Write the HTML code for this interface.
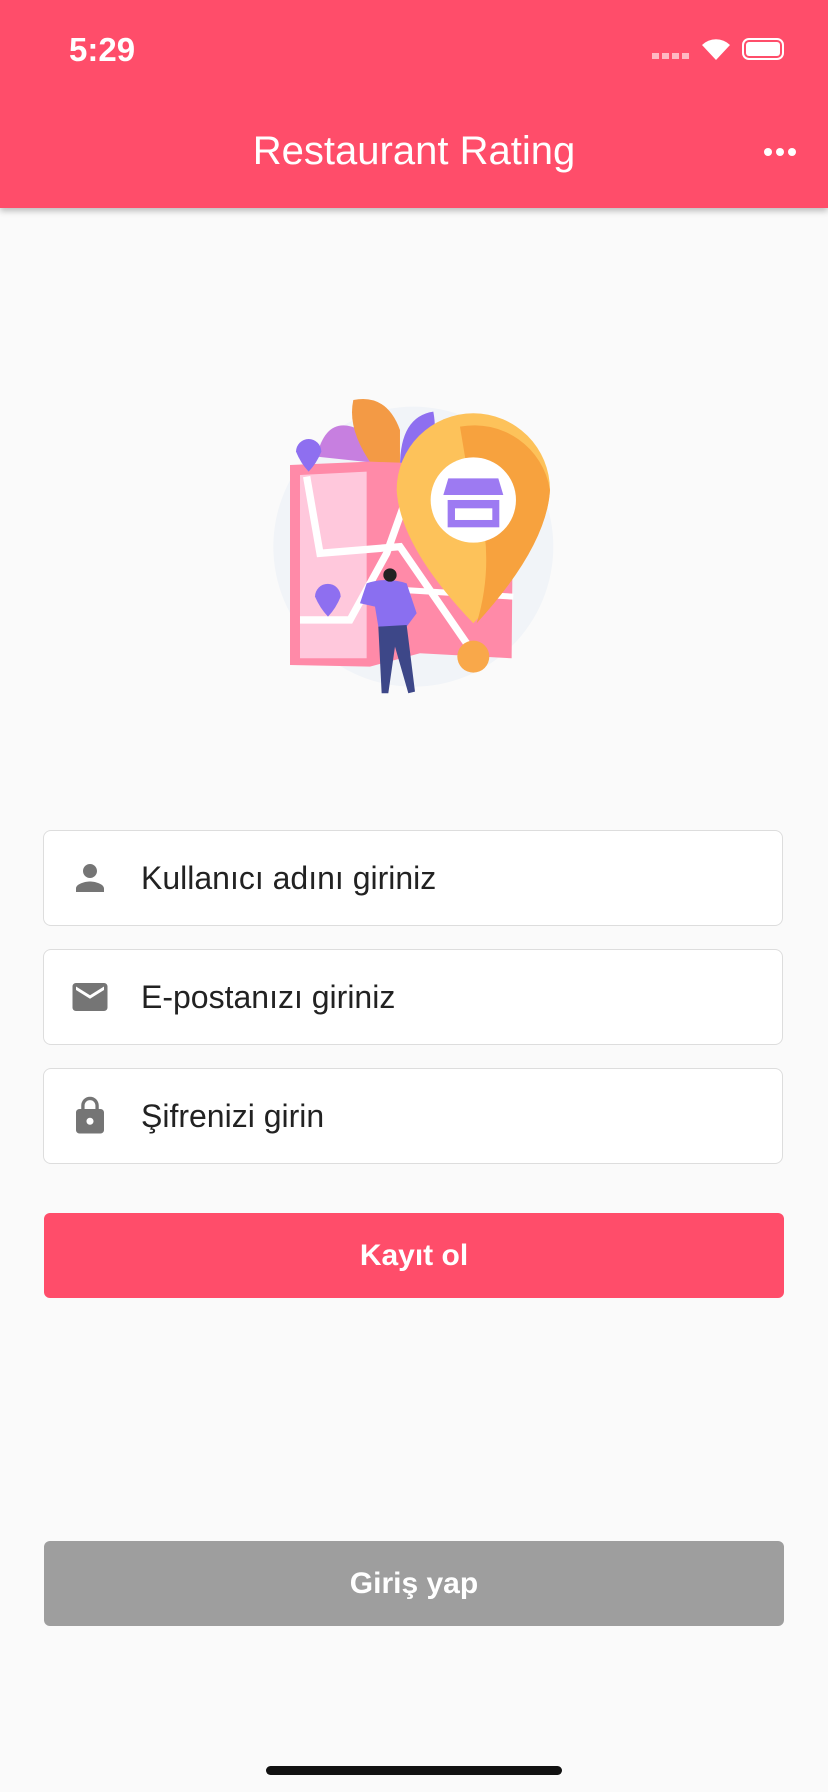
<html><head><style>
body{margin:0;width:828px;height:1792px;background:#fafafa;font-family:"Liberation Sans",sans-serif;position:relative;overflow:hidden}
.hdr{position:absolute;left:0;top:0;width:828px;height:208px;background:#ff4d6a;box-shadow:0 3px 6px rgba(0,0,0,.25)}
.field{position:absolute;left:43px;width:740px;height:96px;background:#fff;border:1px solid #ddd;border-radius:8px;box-sizing:border-box}
.field span{position:absolute;left:97px;top:29px;font-size:32px;color:#222}
.field svg{position:absolute;left:25px;top:26px}
.btn{position:absolute;left:44px;width:740px;height:85px;border-radius:6px;color:#fff;font-weight:bold;font-size:30px;text-align:center;line-height:85px}
</style></head><body>
<div class="hdr">
<div style="position:absolute;left:69px;top:31px;font-size:33px;color:#fff;font-weight:bold">5:29</div>
<div style="position:absolute;left:652px;top:53px;width:38px;height:6px;background:repeating-linear-gradient(90deg,rgba(255,255,255,.6) 0 7px,transparent 7px 10px)"></div>
<svg style="position:absolute;left:700px;top:36px" width="32" height="26" viewBox="0 0 32 26"><path d="M16 24 L2 9 A20 20 0 0 1 30 9 Z" fill="#fff"/></svg>
<div style="position:absolute;left:742px;top:38px;width:42px;height:22px;border:2px solid #fff;border-radius:7px;box-sizing:border-box;padding:2px"><div style="background:#fff;height:100%;border-radius:3px"></div></div>
<div style="position:absolute;left:0;width:828px;top:129px;text-align:center;font-size:40px;color:#fff">Restaurant Rating</div>
<div style="position:absolute;left:764px;top:148px;width:8px;height:8px;border-radius:50%;background:#fff;box-shadow:12px 0 #fff,24px 0 #fff"></div>
</div>
<svg style="position:absolute;left:0;top:0" width="828" height="800">
<g transform="translate(260,380) scale(0.3333)">
<circle cx="460" cy="500" r="420" fill="#f1f4f8"/>
<path d="M170 230 Q200 100 300 150 Q360 200 360 250 Z" fill="#c77fe0"/>
<path d="M280 60 Q380 40 420 150 L420 260 L340 260 Q260 150 280 60Z" fill="#f39a45"/>
<path d="M420 260 Q420 110 520 95 Q540 200 470 270Z" fill="#8e6ff0"/>
<path d="M90 255 L330 245 L760 260 L755 835 L480 820 L330 860 L90 855 Z" fill="#ff8aa8"/>
<path d="M120 285 L320 275 L320 835 L120 835Z" fill="#ffc8dc"/>
<path d="M140 290 L180 520 L420 500 L620 790" stroke="#fff" stroke-width="22" fill="none"/>
<path d="M120 720 L270 720 L380 520 L430 380" stroke="#fff" stroke-width="22" fill="none"/>
<path d="M430 630 L760 650" stroke="#fff" stroke-width="18" fill="none"/>
<path d="M410 330 A230 230 0 1 1 870 330 Q860 500 640 730 Q420 500 410 330Z" fill="#fdc25a"/>
<path d="M600 140 A230 230 0 0 1 870 330 Q860 500 650 730 Q720 500 620 260Z" fill="#f7a23e"/>
<circle cx="640" cy="360" r="128" fill="#fff"/>
<path d="M565 295 L715 295 L730 345 L550 345Z" fill="#9d7af2"/>
<rect x="563" y="360" width="155" height="82" fill="#9d7af2"/><rect x="585" y="385" width="112" height="35" fill="#fff"/>
<circle cx="640" cy="830" r="48" fill="#f9a84a"/>
<path d="M108 215 A38 38 0 1 1 184 215 Q170 250 146 275 Q122 250 108 215Z" fill="#8e6ff0"/>
<path d="M165 650 A38 38 0 1 1 242 650 Q228 685 204 710 Q180 685 165 650Z" fill="#8e6ff0"/>
<path d="M320 610 Q380 590 440 610 L470 700 L440 740 L355 740 L345 680 L300 670Z" fill="#8a6ff0"/>
<path d="M355 740 L440 735 L465 935 L445 940 L405 800 L385 940 L365 940Z" fill="#3d4788"/>
<circle cx="390" cy="585" r="20" fill="#222"/>
</g></svg>
<div class="field" style="top:830px"><svg width="42" height="42" viewBox="0 0 24 24"><path fill="#757575" d="M12 12c2.2 0 4-1.8 4-4s-1.8-4-4-4-4 1.8-4 4 1.8 4 4 4zm0 2c-2.7 0-8 1.3-8 4v2h16v-2c0-2.7-5.3-4-8-4z"/></svg><span>Kullanıcı adını giriniz</span></div>
<div class="field" style="top:949px"><svg width="42" height="42" viewBox="0 0 24 24"><path fill="#757575" d="M20 4H4c-1.1 0-2 .9-2 2v12c0 1.1.9 2 2 2h16c1.1 0 2-.9 2-2V6c0-1.1-.9-2-2-2zm0 4l-8 5-8-5V6l8 5 8-5v2z"/></svg><span>E-postanızı giriniz</span></div>
<div class="field" style="top:1068px"><svg width="42" height="42" viewBox="0 0 24 24"><path fill="#757575" d="M18 8h-1V6c0-2.8-2.2-5-5-5S7 3.2 7 6v2H6c-1.1 0-2 .9-2 2v10c0 1.1.9 2 2 2h12c1.1 0 2-.9 2-2V10c0-1.1-.9-2-2-2zm-6 9c-1.1 0-2-.9-2-2s.9-2 2-2 2 .9 2 2-.9 2-2 2zm3.1-9H8.9V6c0-1.7 1.4-3.1 3.1-3.1s3.1 1.4 3.1 3.1v2z"/></svg><span>Şifrenizi girin</span></div>
<div class="btn" style="top:1213px;background:#ff4d6a">Kayıt ol</div>
<div class="btn" style="top:1541px;background:#9e9e9e">Giriş yap</div>
<div style="position:absolute;left:266px;top:1766px;width:296px;height:9px;border-radius:5px;background:#111"></div>
</body></html>
